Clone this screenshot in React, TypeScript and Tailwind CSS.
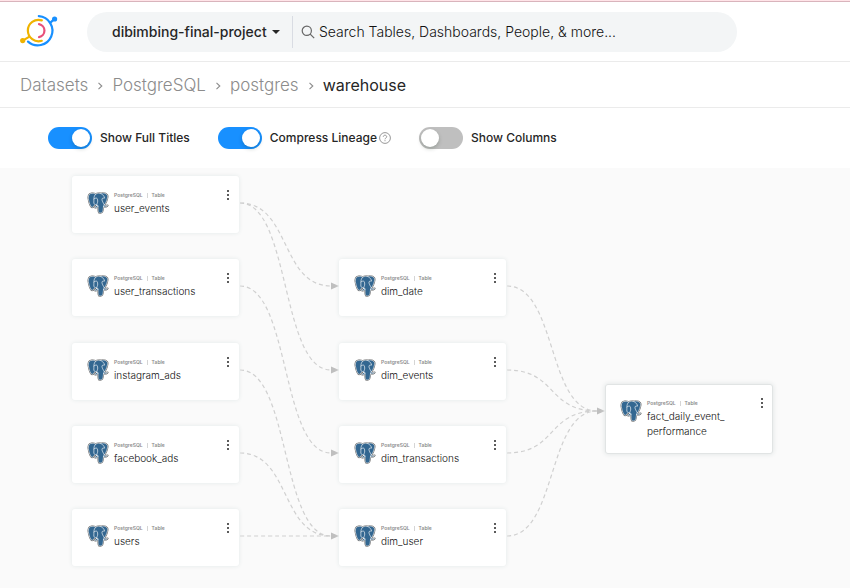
import React from "react";

type TableNode = { id: string; title: string[]; x: number; y: number; focused?: boolean };

const NODES: TableNode[] = [
  { id: "user_events", title: ["user_events"], x: 72, y: 8 },
  { id: "user_transactions", title: ["user_transactions"], x: 72, y: 91 },
  { id: "instagram_ads", title: ["instagram_ads"], x: 72, y: 175 },
  { id: "facebook_ads", title: ["facebook_ads"], x: 72, y: 258 },
  { id: "users", title: ["users"], x: 72, y: 341 },
  { id: "dim_date", title: ["dim_date"], x: 339, y: 91 },
  { id: "dim_events", title: ["dim_events"], x: 339, y: 175 },
  { id: "dim_transactions", title: ["dim_transactions"], x: 339, y: 258 },
  { id: "dim_user", title: ["dim_user"], x: 339, y: 341 },
  { id: "fact", title: ["fact_daily_event_", "performance"], x: 605, y: 216, focused: true },
];

const EDGES: [string, string][] = [
  ["user_events", "dim_date"],
  ["user_events", "dim_events"],
  ["user_transactions", "dim_transactions"],
  ["instagram_ads", "dim_user"],
  ["facebook_ads", "dim_user"],
  ["users", "dim_user"],
  ["dim_date", "fact"],
  ["dim_events", "fact"],
  ["dim_transactions", "fact"],
  ["dim_user", "fact"],
];

const NODE_WIDTH = 167;
const PORT_Y = 27;

function edgePath(from: TableNode, to: TableNode) {
  const x1 = from.x + NODE_WIDTH + 1;
  const y1 = from.y + PORT_Y;
  const x2 = to.x - 8;
  const y2 = to.y + PORT_Y;
  const mid = (x1 + x2) / 2;
  return `M${x1},${y1}C${mid + 5},${y1} ${mid - 5},${y2} ${x2},${y2}`;
}

function PostgresLogo() {
  return (
    <svg viewBox="0 0 432 446" className="mt-px h-[22px] w-[22px] shrink-0" aria-hidden="true">
      <path
        fill="#4a4a4a"
        stroke="#4a4a4a"
        strokeWidth="30"
        d="M323.205,324.227c2.833-23.601,1.984-27.062,19.563-23.239l4.463,0.392c13.517,0.615,31.199-2.174,41.587-7c22.362-10.376,35.622-27.7,13.572-23.148c-50.297,10.376-53.755-6.655-53.755-6.655c53.111-78.803,75.313-178.836,56.149-203.322C352.514-5.534,262.036,26.049,260.522,26.869l-0.482,0.089c-9.938-2.062-21.06-3.294-33.554-3.496c-22.761-0.374-40.032,5.967-53.133,15.904c0,0-161.408-66.498-153.899,83.628c1.597,31.936,45.777,241.655,98.47,178.31c19.259-23.163,37.871-42.748,37.871-42.748c9.242,6.14,20.307,9.272,31.912,8.147l0.897-0.765c-0.281,2.876-0.157,5.689,0.359,9.019c-13.572,15.167-9.584,17.83-36.723,23.416c-27.457,5.659-11.326,15.734-0.797,18.367c12.768,3.193,42.305,7.716,62.268-20.224l-0.795,3.188c5.325,4.26,4.965,30.619,5.72,49.452c0.756,18.834,2.017,36.409,5.856,46.771c3.839,10.36,8.369,37.05,44.036,29.406c29.809-6.388,52.6-15.582,54.677-101.107z"
      />
      <path
        fill="#336791"
        d="M402.395,271.23c-50.302,10.376-53.76-6.655-53.76-6.655c53.111-78.808,75.313-178.843,56.153-203.326c-52.27-66.785-142.752-35.2-144.262-34.38l-0.486,0.087c-9.938-2.063-21.06-3.292-33.56-3.496c-22.761-0.373-40.026,5.967-53.127,15.902c0,0-161.411-66.495-153.904,83.63c1.597,31.938,45.776,241.657,98.471,178.312c19.26-23.163,37.869-42.748,37.869-42.748c9.243,6.14,20.308,9.272,31.908,8.147l0.901-0.765c-0.28,2.876-0.152,5.689,0.361,9.019c-13.575,15.167-9.586,17.83-36.723,23.416c-27.459,5.659-11.328,15.734-0.796,18.367c12.768,3.193,42.307,7.716,62.266-20.224l-0.796,3.188c5.319,4.26,9.054,27.711,8.428,48.969c-0.626,21.259-1.044,35.854,3.147,47.254c4.191,11.4,8.368,37.05,44.042,29.406c29.809-6.388,45.256-22.942,47.405-50.555c1.525-19.631,4.976-16.729,5.194-34.28l2.768-8.309c3.192-26.611,0.507-35.196,18.872-31.203l4.463,0.392c13.517,0.615,31.208-2.174,41.591-7c22.358-10.376,35.618-27.7,13.573-23.148z"
      />
      <g fill="none" stroke="#fff" strokeWidth="13" strokeLinecap="round" strokeLinejoin="round">
        <path d="M215.866,286.484c-1.385,49.516,0.348,99.377,5.193,111.495c4.848,12.118,15.223,35.688,50.9,28.045c29.806-6.39,40.651-18.756,45.357-46.051c3.466-20.082,10.148-75.854,11.005-87.281" />
        <path d="M173.104,38.256c0,0-161.521-66.016-154.012,84.109c1.597,31.938,45.779,241.664,98.473,178.316c19.256-23.166,36.671-41.335,36.671-41.335" />
        <path d="M260.349,26.207c-5.591,1.753,89.848-34.889,144.087,34.417c19.159,24.484-3.043,124.519-56.153,203.329" />
        <path d="M348.282,263.953c0,0,3.461,17.036,53.764,6.653c22.04-4.552,8.776,12.774-13.577,23.155c-18.345,8.514-59.474,10.696-60.146-1.069c-1.729-30.355,21.647-21.133,19.96-28.739c-1.525-6.85-11.979-13.573-18.894-30.338c-6.037-14.633-82.796-126.849,21.287-110.183c3.813-0.789-27.146-99.002-124.553-100.599c-97.385-1.597-94.19,119.762-94.19,119.762" />
        <path d="M188.604,274.334c-13.577,15.166-9.584,17.829-36.723,23.417c-27.459,5.66-11.326,15.733-0.797,18.365c12.768,3.195,42.307,7.718,62.266-20.229c6.078-8.509-0.036-22.086-8.385-25.547c-4.034-1.671-9.428-3.765-16.361,3.994z" />
        <path d="M187.715,274.069c-1.368-8.917,2.93-19.528,7.536-31.942c6.922-18.626,22.893-37.255,10.117-96.339c-9.523-44.029-73.396-9.163-73.436-3.193c-0.039,5.968,2.889,30.26-1.067,58.548c-5.162,36.913,23.488,68.132,56.479,64.938" />
      </g>
    </svg>
  );
}

function DataHubLogo() {
  return (
    <svg viewBox="0 0 38 34" className="h-[34px] w-[38px]" fill="none" strokeWidth="2.2" aria-hidden="true">
      <path d="M18.8 1.2A14.6 14.6 0 1 1 8 26.6" stroke="#1890ff" strokeLinecap="round" />
      <path d="m29.6 8.4 5-4.6" stroke="#1890ff" />
      <circle cx="34.6" cy="4" r="2.6" fill="#1890ff" stroke="none" />
      <path d="M21.8 5.4A10.7 10.7 0 1 0 21.8 25.8" stroke="#efb300" strokeLinecap="round" />
      <path d="m2.8 25.6 6.6-4" stroke="#efb300" />
      <circle cx="2.7" cy="25.6" r="2.6" fill="#efb300" stroke="none" />
      <path d="M19 9.1a6.6 6.6 0 0 1 0 13" stroke="#e8507a" strokeLinecap="round" />
    </svg>
  );
}

function NodeCard({ node }: { node: TableNode }) {
  return (
    <article
      style={{ left: node.x, top: node.y }}
      className={
        "absolute flex rounded-[3px] bg-white pl-[15px] pr-[7px] pt-[15px] " +
        (node.focused
          ? "h-[70px] w-[168px] shadow-[inset_0_0_0_1px_#e1e4e4,0_0_5px_#dde2e2]"
          : "h-[57px] w-[167px] shadow-[0_0_4px_#e2e8e8]")
      }
    >
      <PostgresLogo />
      <div className="ml-[5px] grow">
        <p className="flex h-2.5 items-start text-[5px] font-semibold leading-[8px] text-[#8c8c8c]">
          PostgreSQL
          <span className="mx-1 mt-0.5 h-[5px] w-px bg-[#d5d5d5]" />
          Table
        </p>
        <h2 className="text-[10px] font-light leading-[15px] text-[#111]">
          {node.title.map((line) => (
            <span key={line} className="block whitespace-nowrap">
              {line}
            </span>
          ))}
        </h2>
      </div>
      <button type="button" aria-label={`Actions for ${node.title.join("")}`} className="flex h-2 w-2 items-center justify-center">
        <svg viewBox="0 0 8 12" className="h-3 w-2 shrink-0" fill="#333" aria-hidden="true">
          <path d="M3.2 1h1.6v2H3.2zM3.2 5h1.6v2H3.2zM3.2 9h1.6v2H3.2z" />
        </svg>
      </button>
    </article>
  );
}

function Toggle({ id, label, on, children }: { id: string; label: string; on?: boolean; children?: React.ReactNode }) {
  return (
    <div className="flex items-center gap-2">
      <input
        id={id}
        type="checkbox"
        role="switch"
        defaultChecked={on}
        className="flex h-[22px] w-11 cursor-pointer appearance-none items-center rounded-full bg-[#bfbfbf] px-0.5 before:h-[18px] before:w-[18px] before:rounded-full before:bg-white before:shadow-[0_2px_4px_#00230b33] checked:justify-end checked:bg-[#1890ff]"
      />
      <div className="flex items-center gap-0.5">
        <label htmlFor={id} className="text-xs font-medium leading-5">
          {label}
        </label>
        {children}
      </div>
    </div>
  );
}

function Chevron() {
  return (
    <svg viewBox="0 0 6 8" className="mt-0.5 h-2 w-1.5" fill="none" stroke="#8c8c8c" strokeWidth="1.1" aria-hidden="true">
      <path d="m1.5 .8 3.3 3.2L1.5 7.2" />
    </svg>
  );
}

export default function App() {
  const byId = (id: string) => NODES.find((n) => n.id === id)!;
  return (
    <div className="flex min-h-screen flex-col bg-white font-['Inter',sans-serif] text-[#262626]">
      <div className="h-0.5 border-b border-[#d9b4bc] bg-[#ffe4e8]" />
      <header className="flex h-[60px] items-center border-b border-[#ebebeb] pl-5 pr-6">
        <a href="#home" aria-label="Home" className="mr-[29px] shrink-0">
          <DataHubLogo />
        </a>
        <div className="flex h-10 max-w-[650px] grow items-center rounded-full bg-[#f3f5f6]">
          <div className="relative flex h-8 items-center border-r border-[#d9dce3]">
            <select aria-label="Project" className="w-[205px] cursor-pointer appearance-none bg-transparent pl-[25px] text-sm font-medium">
              <option>dibimbing-final-project</option>
            </select>
            <svg viewBox="0 0 8 4" className="pointer-events-none absolute right-3 h-1 w-2" fill="#262626" aria-hidden="true">
              <path d="M0 0h8L4 4z" />
            </svg>
          </div>
          <svg viewBox="0 0 14 14" className="ml-2 h-3.5 w-3.5 shrink-0" fill="none" stroke="#666" strokeWidth="1.2" aria-hidden="true">
            <circle cx="5.8" cy="5.8" r="4.6" />
            <path d="m9.2 9.2 4 4" />
          </svg>
          <input
            type="search"
            aria-label="Search"
            placeholder="Search Tables, Dashboards, People, & more..."
            className="ml-1 min-w-0 grow bg-transparent text-sm font-light outline-none placeholder:text-[#111]"
          />
        </div>
      </header>

      <nav aria-label="Breadcrumb" className="flex h-[46px] items-center gap-[9px] border-b border-[#ebebeb] px-5 text-[17px] font-light leading-6 text-[#8c8c8c]">
        <a href="#datasets">Datasets</a>
        <Chevron />
        <a href="#postgresql">PostgreSQL</a>
        <Chevron />
        <a href="#postgres">postgres</a>
        <Chevron />
        <a href="#warehouse" aria-current="page" className="text-base font-normal leading-6 text-[#262626]">
          warehouse
        </a>
      </nav>

      <div className="flex h-[60px] items-center gap-7 px-12">
        <Toggle id="full-titles" label="Show Full Titles" on />
        <Toggle id="compress" label="Compress Lineage" on>
          <svg viewBox="0 0 12 12" className="h-3 w-3" fill="none" stroke="#8c8c8c" strokeWidth="0.9" aria-hidden="true">
            <circle cx="6" cy="6" r="5.4" />
            <path d="M4.3 4.8c0-2.2 3.4-2.1 3.4 0C7.7 6 6 6 6 7.3M6 8.2v1" />
          </svg>
        </Toggle>
        <Toggle id="columns" label="Show Columns" />
      </div>

      <main className="relative min-h-[420px] grow overflow-hidden bg-[#fafafa]">
        <svg className="absolute inset-0 h-full w-full" aria-hidden="true">
          {EDGES.map(([a, b]) => (
            <path key={a + b} d={edgePath(byId(a), byId(b))} fill="none" stroke="#d0d0d0" strokeWidth="1.2" strokeDasharray="4 3" />
          ))}
          {NODES.filter((n) => n.x > 72).map((n) => (
            <path key={n.id} d={`M${n.x - 8},${n.y + PORT_Y - 3.5}l8,3.5l-8,3.5z`} fill="#bfbfbf" />
          ))}
        </svg>
        {NODES.map((n) => (
          <NodeCard key={n.id} node={n} />
        ))}
      </main>
    </div>
  );
}
